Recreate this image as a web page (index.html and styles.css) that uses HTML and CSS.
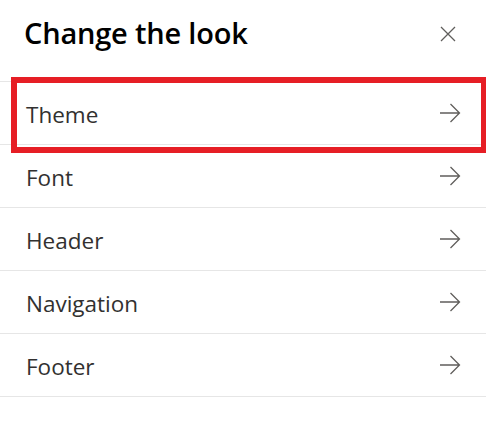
FILE: index.html
```html
<!DOCTYPE html>
<html lang="en">
<head>
<meta charset="utf-8">
<title>Change the look</title>
<link rel="stylesheet" href="styles.css">
</head>
<body>
<div class="panel">
  <header class="panel-header">
    <h1 class="panel-title">Change the look</h1>
    <button class="close-btn" aria-label="Close">
      <svg width="16" height="16" viewBox="0 0 16 16"><path d="M1 1 L15 15 M15 1 L1 15" stroke="#605e5c" stroke-width="1.3" fill="none"/></svg>
    </button>
  </header>
  <ul class="menu">
    <li class="menu-item"><span class="menu-label">Theme</span><svg class="arrow" width="22" height="20" viewBox="0 0 22 20"><path d="M1 10 H20.5 M11.5 1 L20.5 10 L11.5 19" stroke="#605e5c" stroke-width="1.3" fill="none"/></svg></li>
    <li class="menu-item"><span class="menu-label">Font</span><svg class="arrow" width="22" height="20" viewBox="0 0 22 20"><path d="M1 10 H20.5 M11.5 1 L20.5 10 L11.5 19" stroke="#605e5c" stroke-width="1.3" fill="none"/></svg></li>
    <li class="menu-item"><span class="menu-label">Header</span><svg class="arrow" width="22" height="20" viewBox="0 0 22 20"><path d="M1 10 H20.5 M11.5 1 L20.5 10 L11.5 19" stroke="#605e5c" stroke-width="1.3" fill="none"/></svg></li>
    <li class="menu-item"><span class="menu-label">Navigation</span><svg class="arrow" width="22" height="20" viewBox="0 0 22 20"><path d="M1 10 H20.5 M11.5 1 L20.5 10 L11.5 19" stroke="#605e5c" stroke-width="1.3" fill="none"/></svg></li>
    <li class="menu-item"><span class="menu-label">Footer</span><svg class="arrow" width="22" height="20" viewBox="0 0 22 20"><path d="M1 10 H20.5 M11.5 1 L20.5 10 L11.5 19" stroke="#605e5c" stroke-width="1.3" fill="none"/></svg></li>
  </ul>
  <div class="highlight"></div>
</div>
</body>
</html>
```
FILE: styles.css
```css
html, body {
  margin: 0;
  padding: 0;
  background: #ffffff;
}
body {
  font-family: "Open Sans", "Noto Sans", "Liberation Sans", sans-serif;
  width: 486px;
  height: 423px;
  overflow: hidden;
}
.panel {
  position: relative;
  width: 486px;
}
.panel-header {
  height: 81px;
  display: flex;
  align-items: center;
  justify-content: space-between;
  padding: 0 30px 14px 24px;
  box-sizing: border-box;
}
.panel-title {
  margin: 0;
  font-size: 29px;
  font-weight: 600;
  color: #000000;
  letter-spacing: -0.2px;
  line-height: 1.2;
}
.close-btn {
  border: 0;
  background: none;
  padding: 0;
  width: 16px;
  height: 16px;
  display: flex;
}
.menu {
  list-style: none;
  margin: 0;
  padding: 0;
  border-top: 1px solid #e6e6e6;
}
.menu-item {
  height: 62px;
  border-bottom: 1px solid #e6e6e6;
  display: flex;
  align-items: center;
  justify-content: space-between;
  padding: 0 25px 0 26px;
}
.menu-label {
  font-size: 22.5px;
  color: #323130;
  padding-top: 2px;
}
.arrow {
  display: block;
}
.highlight {
  position: absolute;
  left: 11px;
  top: 77px;
  width: 476px;
  height: 76px;
  border: 6px solid #e61e25;
  box-sizing: border-box;
}
```
